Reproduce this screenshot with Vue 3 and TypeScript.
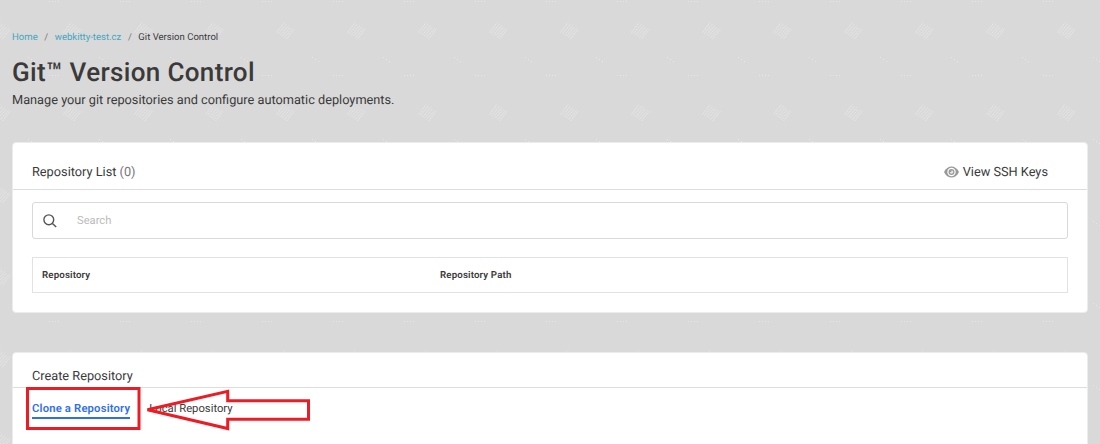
<script setup lang="ts">
const columns: string[] = ['Repository', 'Repository Path']
const count = 0
</script>

<template>
  <div class="page">
    <svg class="backdrop" width="1100" height="444" aria-hidden="true">
      <defs>
        <pattern id="tile" x="37" y="0" width="71" height="82" patternUnits="userSpaceOnUse">
          <g fill="none" stroke="#e7e7e7" stroke-width="1" stroke-dasharray="1.6 .7">
            <path d="M26.5 32.5L34 22.5M28.5 33.5L36.5 24M30.5 35L38.5 25.5M32.5 36L40.5 27M34.5 37.5L42.5 28.5M36.5 39L44 29.5" />
          </g>
          <path d="M12 75h1v1h-1zM15 75h1v1h-1zM18 75h1v1h-1zM21 75h1v1h-1zM62 57h1v1h-1zM65 59h1v1h-1zM68 61h1v1h-1z" fill="#e7e7e7" />
        </pattern>
        <pattern id="top" x="37" y="0" width="71" height="82" patternUnits="userSpaceOnUse">
          <path d="M12 1h1v1h-1zM15 1h1v1h-1zM18 1h1v1h-1zM21 1h1v1h-1z" fill="#e7e7e7" />
        </pattern>
      </defs>
      <rect width="1100" height="444" fill="url(#tile)" />
      <rect width="1100" height="4" fill="url(#top)" />
    </svg>

    <header class="heading">
      <nav class="crumbs">
        <a>Home</a><i>/</i><a class="domain">webkitty-test.cz</a><i>/</i><span>Git Version Control</span>
      </nav>
      <h1>Git™ Version Control</h1>
      <p>Manage your git repositories and configure automatic deployments.</p>
    </header>

    <section class="card list">
      <div class="card-head">
        <h2>Repository List <span>({{ count }})</span></h2>
        <a class="keys">
          <svg width="15" height="12" viewBox="0 0 15 12">
            <path d="M0 6C3.5-1.4 11.5-1.4 15 6C11.5 13.4 3.5 13.4 0 6Z" fill="#999" />
            <circle cx="7.5" cy="6" r="3.6" fill="#999" stroke="#fff" stroke-width="1.2" />
            <path d="M7.5 4.2A1.8 1.8 0 1 1 5.7 6A1.4 1.4 0 0 0 7.5 4.2Z" fill="#e4e4e4" />
          </svg>
          <span>View SSH Keys</span>
        </a>
      </div>
      <div class="search">
        <svg width="14" height="14" viewBox="0 0 14 14" fill="none" stroke="#555" stroke-width="1.4">
          <circle cx="5.8" cy="5.8" r="4.9" />
          <path d="M9.4 9.4L13.2 13.1" />
        </svg>
        <span>Search</span>
      </div>
      <div class="table-head">
        <span v-for="column in columns" :key="column">{{ column }}</span>
      </div>
    </section>

    <section class="card create">
      <div class="card-head"><h2>Create Repository</h2></div>
      <div class="tabs">
        <a class="active">Clone a Repository</a>
        <a>Local Repository</a>
      </div>
    </section>

    <svg class="marks" width="1100" height="444" fill="none" stroke="#ed1c24" stroke-width="3" aria-hidden="true">
      <rect x="27.5" y="388.5" width="111.5" height="40" />
      <path d="M147.5 409.7L227.7 391.3V400.7H308.5V419.3H227.7V428.5Z" />
    </svg>
  </div>
</template>

<style scoped>
.page {
  position: relative;
  width: 1100px;
  height: 444px;
  overflow: hidden;
  box-sizing: border-box;
  padding: 0 12px;
  background: #d9d9d9;
  font-family: Roboto, "Liberation Sans", sans-serif;
  text-rendering: geometricPrecision;
  color: #3a3a3a;
}
.page * { box-sizing: border-box; }
.backdrop, .marks {
  position: absolute;
  left: 0;
  top: 0;
}
.marks { pointer-events: none; }
.heading {
  position: relative;
  height: 142px;
  padding-top: 31px;
  white-space: nowrap;
}
.crumbs {
  display: flex;
  height: 14px;
  font-size: 9.55px;
  line-height: 14px;
}
.crumbs a { color: #45a6c0; }
.crumbs i {
  width: 17px;
  text-align: center;
  font-style: normal;
  color: #777;
}
h1 {
  margin: 12px 0 0;
  height: 32px;
  font-size: 26px;
  line-height: 32px;
  font-weight: 500;
  letter-spacing: 0.35px;
}
.heading p {
  margin: 3px 0 0;
  font-size: 12.75px;
  line-height: 18px;
}
.card {
  position: relative;
  background: #fff;
  border: 1px solid #ececec;
  border-radius: 4px;
}
.list { height: 171px; }
.create { height: 110px; margin-top: 39px; }
.card-head {
  display: flex;
  justify-content: space-between;
  height: 47px;
  padding: 21px 39px 0 19px;
  border-bottom: 1px solid #ddd;
}
.create .card-head { height: 35px; padding-top: 15px; }
h2 {
  margin: 0;
  font-size: 12.75px;
  line-height: 18px;
  font-weight: 400;
}
h2 span { color: #777; }
.keys {
  display: flex;
  gap: 4px;
  font-size: 12.75px;
  line-height: 18px;
}
.keys svg { margin-top: 2px; }
.search {
  display: flex;
  align-items: center;
  gap: 20px;
  height: 37px;
  margin: 12px 19px 0;
  padding-left: 10px;
  border: 1px solid #d9d9d9;
  border-radius: 3px;
  color: #bbb;
  font-size: 11.2px;
}
.table-head {
  display: grid;
  grid-template-columns: 398px 1fr;
  height: 36px;
  margin: 18px 19px 0;
  padding-left: 9px;
  border: 1px solid #e2e2e2;
  font-size: 9.7px;
  font-weight: 600;
  letter-spacing: 0.15px;
  line-height: 35px;
}
.tabs {
  display: flex;
  gap: 19px;
  padding: 12px 19px 0;
  font-size: 11.25px;
  line-height: 17px;
}
.active {
  height: 19px;
  border-bottom: 2px solid #2f6fea;
  color: #2f6fea;
  font-weight: 600;
  letter-spacing: 0.18px;
}
</style>
